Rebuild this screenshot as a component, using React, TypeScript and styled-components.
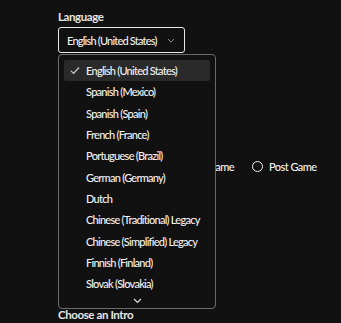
import React from "react";
import styled, { createGlobalStyle } from "styled-components";

const Global = createGlobalStyle`
  html, body { margin: 0; padding: 0; background: #111111; }
  body { font-family: Lato, "Noto Sans", sans-serif; color: #f2f2f2; }
  * { box-sizing: border-box; }
`;

const Page = styled.div`
  width: 341px;
  height: 323px;
  overflow: hidden;
  padding: 10px 0 0 58px;
  display: flex;
  flex-direction: column;
  position: relative;
`;

const Field = styled.div`
  position: relative;
  display: flex;
  flex-direction: column;
  gap: 3px;
`;

const Label = styled.div`
  font-size: 11.5px;
  font-weight: 700;
  color: #e6e6e6;
  line-height: 14px;
  letter-spacing: -0.4px;
  white-space: nowrap;
`;

const Trigger = styled.button`
  width: 127px;
  height: 26px;
  border: 1px solid #e8e8e8;
  border-radius: 3px;
  background: transparent;
  color: #f2f2f2;
  font-family: inherit;
  font-size: 11px;
  font-weight: 500;
  letter-spacing: -0.8px;
  white-space: nowrap;
  display: flex;
  align-items: center;
  gap: 10px;
  padding: 0 0 0 8px;
  text-align: left;
`;

const Chevron = styled.svg`
  flex: none;
`;

const Menu = styled.div`
  position: absolute;
  top: 44px;
  left: 0;
  width: 158px;
  height: 255px;
  border: 1px solid #6a6a6a;
  border-radius: 4px;
  background: #111111;
  padding: 5px 5px 0 5px;
  display: flex;
  flex-direction: column;
  z-index: 2;
`;

const Item = styled.div<{ $active?: boolean }>`
  height: 21.3px;
  flex: none;
  display: flex;
  align-items: center;
  padding-left: 22px;
  position: relative;
  font-size: 11px;
  font-weight: 500;
  letter-spacing: -0.74px;
  white-space: nowrap;
  color: #f2f2f2;
  border-radius: 2px;
  background: ${(p) => (p.$active ? "#2a2a2a" : "transparent")};
`;

const Check = styled.svg`
  position: absolute;
  left: 6px;
  top: 6px;
`;

const ScrollDown = styled.div`
  flex: none;
  display: flex;
  justify-content: center;
  padding-top: 4px;
  height: 14px;
`;

const Section = styled.div<{ $mt: number }>`
  margin-top: ${(p) => p.$mt}px;
  display: flex;
  flex-direction: column;
`;

const RadioRow = styled.div`
  display: flex;
  align-items: center;
  gap: 18px;
  padding-left: 116px;
`;

const RadioOption = styled.label`
  display: flex;
  align-items: center;
  gap: 6px;
  font-size: 11px;
  font-weight: 500;
  letter-spacing: -0.55px;
  white-space: nowrap;
  color: #f2f2f2;
`;

const Circle = styled.span`
  width: 11px;
  height: 11px;
  border: 1.5px solid #f0f0f0;
  border-radius: 50%;
  display: inline-block;
`;

const languages = [
  "English (United States)",
  "Spanish (Mexico)",
  "Spanish (Spain)",
  "French (France)",
  "Portuguese (Brazil)",
  "German (Germany)",
  "Dutch",
  "Chinese (Traditional) Legacy",
  "Chinese (Simplified) Legacy",
  "Finnish (Finland)",
  "Slovak (Slovakia)",
];

export default function App() {
  return (
    <>
      <Global />
      <Page>
        <Field>
          <Label>Language</Label>
          <Trigger>
            English (United States)
            <Chevron width="8" height="5" viewBox="0 0 8 5">
              <path d="M1 1l3 3 3-3" fill="none" stroke="#8a8a8a" strokeWidth="1" />
            </Chevron>
          </Trigger>
          <Menu>
            {languages.map((l, i) => (
              <Item key={l} $active={i === 0}>
                {i === 0 && (
                  <Check width="10" height="9" viewBox="0 0 10 9">
                    <path d="M1 4.8l2.6 2.6L9 1.5" fill="none" stroke="#cfcfcf" strokeWidth="1.2" />
                  </Check>
                )}
                {l}
              </Item>
            ))}
            <ScrollDown>
              <svg width="9" height="6" viewBox="0 0 9 6">
                <path d="M1 1l3.5 3.5L8 1" fill="none" stroke="#dcdcdc" strokeWidth="1.2" />
              </svg>
            </ScrollDown>
          </Menu>
        </Field>
        <Section $mt={107}>
          <RadioRow>
            <RadioOption>
              <Circle />
              Pre Game
            </RadioOption>
            <RadioOption>
              <Circle />
              Post Game
            </RadioOption>
          </RadioRow>
        </Section>
        <Section $mt={135}>
          <Label>Choose an Intro</Label>
        </Section>
      </Page>
    </>
  );
}
